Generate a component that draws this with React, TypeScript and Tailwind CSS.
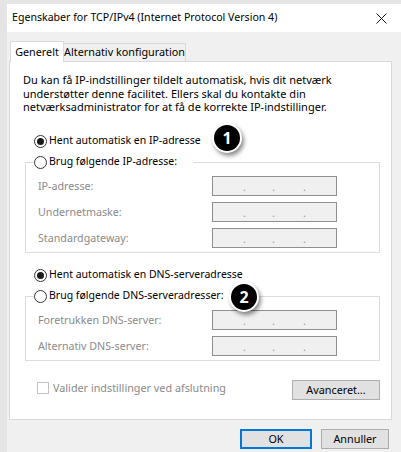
import React from 'react';

function Radio({ checked }: { checked?: boolean }) {
  return (
    <span className="flex h-[13px] w-[13px] shrink-0 items-center justify-center rounded-full border border-[#333] bg-white">
      {checked && <span className="h-[7px] w-[7px] rounded-full bg-[#1a1a1a]" />}
    </span>
  );
}

function IpBox() {
  return (
    <div className="flex h-[20px] w-[125px] items-end border border-[#8f8f8f] bg-[#f0f0f0] pb-[3px] leading-none text-[#9a9a9a]">
      <span className="w-[33px] text-right">.</span>
      <span className="w-[29px] text-right">.</span>
      <span className="w-[31px] text-right">.</span>
    </div>
  );
}

function FieldRow({ label }: { label: string }) {
  return (
    <div className="flex h-[20px] items-center">
      <span className="w-[178px] pl-[4px] text-[10.7px] text-[#8a8a8a]">{label}</span>
      <IpBox />
    </div>
  );
}

function Badge({ n }: { n: string }) {
  return (
    <span className="absolute flex h-[30px] w-[30px] items-center justify-center rounded-full border-2 border-white bg-black text-[16px] font-bold text-white shadow-[2px_3px_4px_rgba(0,0,0,0.45)]">
      {n}
    </span>
  );
}

function GroupBox({ legend, children }: { legend: string; children: React.ReactNode }) {
  return (
    <fieldset className="ml-[15px] mr-[11px] border border-[#dcdcdc] pb-[4px] pl-[8px]">
      <legend className="flex h-[16px] items-center gap-[2px] pr-[16px]">
        <Radio />
        <span className="text-[10.5px] text-black">{legend}</span>
      </legend>
      <div className="flex flex-col gap-[6px] pt-[6px]">{children}</div>
    </fieldset>
  );
}

export default function App() {
  return (
    <div className="relative h-[452px] w-[401px] overflow-hidden bg-[#e4e4e4] font-['Noto_Sans',sans-serif] text-[11px] text-black">
      <div className="ml-[7px] mt-[4px] flex h-[448px] flex-col bg-[#f0f0f0]">
        {/* title bar */}
        <div className="flex h-[28px] items-center justify-between bg-white pl-[5px] pr-[10px]">
          <span className="text-[10.6px]">Egenskaber for TCP/IPv4 (Internet Protocol Version 4)</span>
          <svg width="11" height="11" viewBox="0 0 11 11" className="mr-[4px]">
            <path d="M0.5 0.5 L10.5 10.5 M10.5 0.5 L0.5 10.5" stroke="#111" strokeWidth="1" />
          </svg>
        </div>

        {/* tabs */}
        <div className="ml-[3px] mt-[9px] flex items-end whitespace-nowrap text-[10.8px]">
          <div className="relative z-10 -mb-px flex h-[21px] w-[54px] items-center justify-center border border-b-0 border-[#d9d9d9] bg-white">
            Generelt
          </div>
          <div className="flex h-[18px] w-[122px] items-center justify-center border border-b-0 border-l-0 border-[#d9d9d9] bg-[#f0f0f0]">
            Alternativ konfiguration
          </div>
        </div>

        {/* tab panel */}
        <div className="relative ml-[2px] mr-[9px] flex h-[359px] flex-col border border-[#d9d9d9] bg-white">
          <p className="pl-[13px] pt-[11px] leading-[13.5px]">
            Du kan få IP-indstillinger tildelt automatisk, hvis dit netværk
            <br />
            understøtter denne facilitet. Ellers skal du kontakte din
            <br />
            netværksadministrator for at få de korrekte IP-indstillinger.
          </p>

          <label className="ml-[24px] mt-[19.5px] flex h-[16px] items-center gap-[2px] text-[10.5px]">
            <Radio checked />
            <span>Hent automatisk en IP-adresse</span>
          </label>

          <div className="mt-[5px]">
            <GroupBox legend="Brug følgende IP-adresse:">
              <FieldRow label="IP-adresse:" />
              <FieldRow label="Undernetmaske:" />
              <FieldRow label="Standardgateway:" />
            </GroupBox>
          </div>

          <label className="ml-[24px] mt-[14px] flex h-[16px] items-center gap-[2px] text-[10.5px]">
            <Radio checked />
            <span>Hent automatisk en DNS-serveradresse</span>
          </label>

          <div className="mt-[5px]">
            <GroupBox legend="Brug følgende DNS-serveradresser:">
              <FieldRow label="Foretrukken DNS-server:" />
              <FieldRow label="Alternativ DNS-server:" />
            </GroupBox>
          </div>

          <div className="mt-[19px] flex items-start pl-[27px] pr-[11px]">
            <div className="flex flex-1 items-center gap-[4px]">
              <span className="h-[12px] w-[12px] shrink-0 border border-[#c2c2c2] bg-white" />
              <span className="text-[10.8px] text-[#8a8a8a]">Valider indstillinger ved afslutning</span>
            </div>
            <button className="h-[20px] w-[88px] border border-[#adadad] bg-[#e1e1e1] text-[10.8px]">Avanceret...</button>
          </div>

          {/* callout badges */}
          <div className="absolute left-[202px] top-[61px]">
            <Badge n="1" />
          </div>
          <div className="absolute left-[219px] top-[220px]">
            <Badge n="2" />
          </div>
        </div>

        {/* dialog buttons */}
        <div className="mt-[9px] flex justify-end gap-[9px] pr-[12px] text-[10.8px]">
          <button className="h-[20px] w-[72px] border-2 border-[#0078d7] bg-[#e1e1e1]">OK</button>
          <button className="h-[20px] w-[68px] border border-[#adadad] bg-[#e1e1e1]">Annuller</button>
        </div>
      </div>
    </div>
  );
}
